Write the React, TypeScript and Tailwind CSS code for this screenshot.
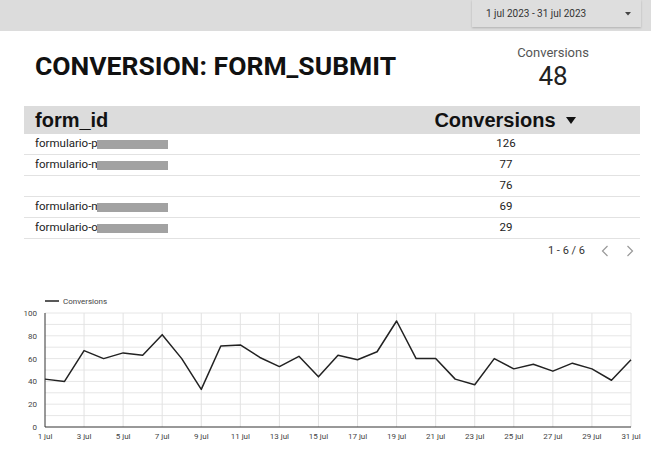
import React from "react";

const data = [42, 40, 67, 60, 65, 63, 81, 60, 33, 71, 72, 61, 53, 62, 44, 63, 59, 66, 93, 60, 60, 42, 37, 60, 51, 55, 49, 56, 51, 41, 59];
const X = (i: number) => 45 + (i * 586) / 30;
const Y = (v: number) => 137 - v * 1.14;

const rows: { name: string; redact: boolean; value: number }[] = [
  { name: "formulario-p", redact: true, value: 126 },
  { name: "formulario-m", redact: true, value: 77 },
  { name: "", redact: false, value: 76 },
  { name: "formulario-m", redact: true, value: 69 },
  { name: "formulario-o", redact: true, value: 29 },
];

function Chart() {
  const pts = data.map((v, i) => `${X(i).toFixed(2)},${Y(v).toFixed(2)}`).join(" ");
  const hLines = [10, 20, 30, 40, 50, 60, 70, 80, 90, 100];
  const vDays = [2, 4, 6, 8, 10, 12, 14, 16, 18, 20, 22, 24, 26, 28, 30];
  const labelDays = [0, 2, 4, 6, 8, 10, 12, 14, 16, 18, 20, 22, 24, 26, 28, 30];
  return (
    <svg width={651} height={168} viewBox="0 0 651 168" className="block">
      <line x1={45} y1={11} x2={59} y2={11} stroke="#222" strokeWidth={1.5} />
      <text x={63} y={14} fontSize={8} fill="#444">Conversions</text>
      {hLines.map((v) => (
        <line key={v} x1={45} x2={631} y1={Y(v)} y2={Y(v)} stroke="#e6e6e6" strokeWidth={1} />
      ))}
      {vDays.map((d) => (
        <line key={d} x1={X(d)} x2={X(d)} y1={Y(100)} y2={Y(0)} stroke="#e2e2e2" strokeWidth={1} />
      ))}
      <line x1={45} x2={45} y1={Y(100)} y2={Y(0)} stroke="#333" strokeWidth={1} />
      <line x1={45} x2={631} y1={Y(0)} y2={Y(0)} stroke="#333" strokeWidth={1} />
      {[0, 20, 40, 60, 80, 100].map((v) => (
        <text key={v} x={37} y={Y(v) + 3} fontSize={8} fill="#444" textAnchor="end">
          {v}
        </text>
      ))}
      {labelDays.map((d) => (
        <text key={d} x={X(d)} y={149} fontSize={8} fill="#444" textAnchor="middle">
          {`${d + 1} jul`}
        </text>
      ))}
      <polyline points={pts} fill="none" stroke="#222" strokeWidth={1.5} strokeLinejoin="round" />
    </svg>
  );
}

export default function App() {
  return (
    <div className="w-[651px] h-[458px] bg-white overflow-hidden font-['Roboto',sans-serif] text-[#222]">
      {/* top bar */}
      <div className="h-[31px] bg-[#dcdcdc] flex justify-end pr-[10px]">
        <div className="w-[169px] h-[27px] bg-[#dedede] shadow-[0_1px_2px_rgba(0,0,0,0.2)] flex items-center justify-between pl-[14px] pr-[10px]">
          <span className="text-[10px] text-[#333]">1 jul 2023 - 31 jul 2023</span>
          <svg width="6" height="4" viewBox="0 0 6 4">
            <path d="M0 0 L6 0 L3 3.5 Z" fill="#444" />
          </svg>
        </div>
      </div>

      {/* header */}
      <div className="h-[75px] flex">
        <div className="w-[502px] pl-[35px] pt-[19px]">
          <h1 className="text-[26.5px] leading-[32px] font-bold text-[#111]">CONVERSION: FORM_SUBMIT</h1>
        </div>
        <div className="w-[102px] pt-[14px] flex flex-col items-center">
          <div className="text-[13px] leading-[16px] text-[#555]">Conversions</div>
          <div className="text-[26px] leading-[30px] text-[#222]">48</div>
        </div>
      </div>

      {/* table */}
      <div className="ml-[24px] w-[616px]">
        <div className="h-[28px] bg-[#dcdcdc] flex items-center font-['Liberation_Sans',Arial,sans-serif] font-bold text-[20px] leading-[28px] text-[#111]">
          <div className="w-[348px] pl-[11px]">form_id</div>
          <div className="flex-1 flex items-center justify-center gap-[10px] pr-[2px]">
            <span>Conversions</span>
            <svg width="10" height="7" viewBox="0 0 10 7">
              <path d="M0 0 L10 0 L5 7 Z" fill="#111" />
            </svg>
          </div>
        </div>
        {rows.map((r, i) => (
          <div key={i} className="h-[21px] border-b border-[#e2e2e2] flex items-center text-[11.5px] text-[#222]">
            <div className="relative w-[348px] h-full pl-[11px] flex items-center">
              {r.name && <span className="whitespace-nowrap">{r.name}</span>}
              {r.redact && <span className="absolute left-[73px] top-[6px] w-[71px] h-[9px] bg-[#a2a2a2]" />}
            </div>
            <div className="flex-1 text-center">{r.value}</div>
          </div>
        ))}
        <div className="h-[24px] flex items-center justify-end pr-[6px] text-[11px] text-[#333]">
          <span>1 - 6 / 6</span>
          <svg width="8" height="12" viewBox="0 0 8 12" className="ml-[16px]">
            <path d="M6.5 1 L1.5 6 L6.5 11" fill="none" stroke="#999" strokeWidth="1.2" />
          </svg>
          <svg width="8" height="12" viewBox="0 0 8 12" className="ml-[17px]">
            <path d="M1.5 1 L6.5 6 L1.5 11" fill="none" stroke="#999" strokeWidth="1.2" />
          </svg>
        </div>
      </div>

      {/* chart */}
      <div className="mt-[27px]">
        <Chart />
      </div>
    </div>
  );
}
